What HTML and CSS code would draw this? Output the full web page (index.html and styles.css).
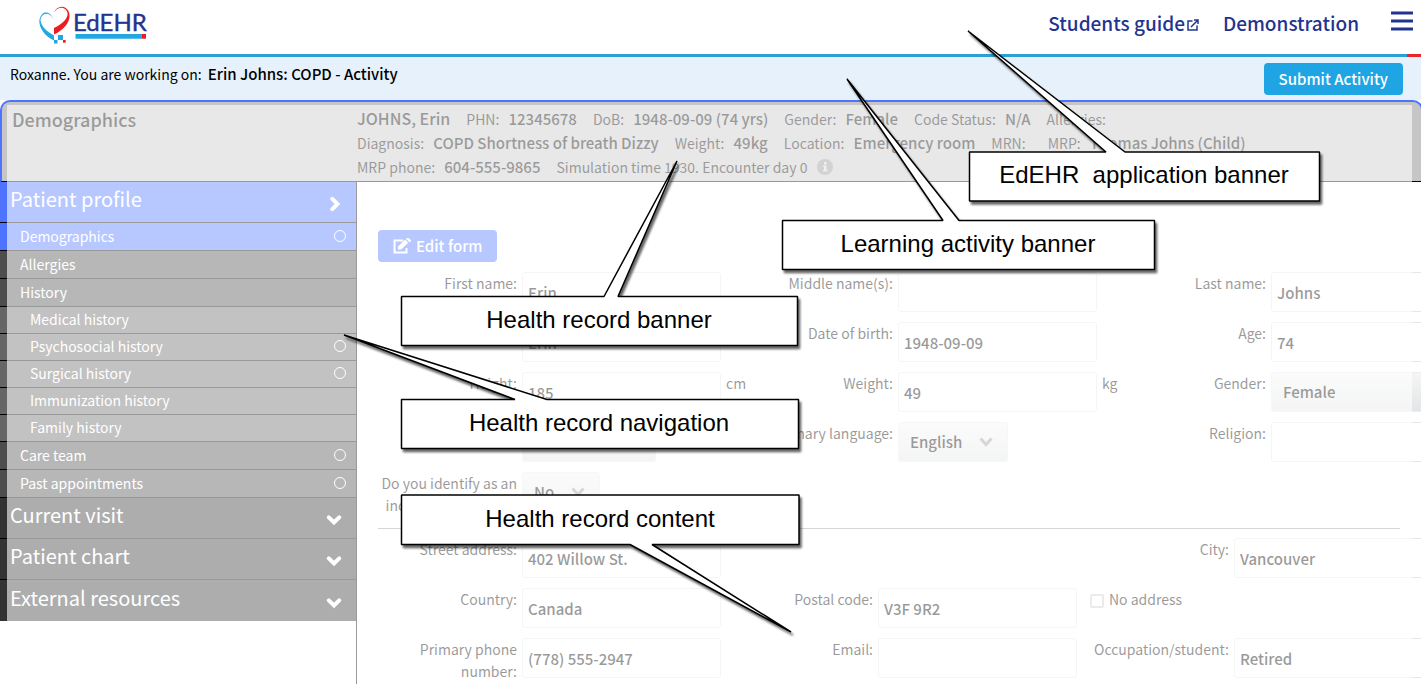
FILE: index.html
```html
<!DOCTYPE html>
<html lang="en">
<head>
<meta charset="utf-8">
<title>EdEHR - Demographics</title>
<link rel="stylesheet" href="styles.css">
</head>
<body>
<svg class="defs" aria-hidden="true">
  <symbol id="chevron-down" viewBox="0 0 16 12"><path d="M2.800 3.300 8 8.500 13.200 3.300" fill="none" stroke="currentColor" stroke-width="4" stroke-linecap="round"/></symbol>
  <symbol id="chevron-right" viewBox="0 0 12 16"><path d="M3.300 2.800 8.500 8 3.300 13.200" fill="none" stroke="currentColor" stroke-width="4" stroke-linecap="round"/></symbol>
  <symbol id="caret" viewBox="0 0 16 12"><path d="M2.500 2.500 8 8.500 13.500 2.500" fill="none" stroke="currentColor" stroke-width="3"/></symbol>
</svg>
<div class="page">
  <header class="app-bar">
    <svg class="logo" viewBox="0 0 110 40" role="img" aria-label="EdEHR">
      <path d="M15.500 13.800C13.500 7 7.500 4.500 4 8.500C-2.500 15.500 3.500 28.500 16 34.500V29.500C6 24.500 -.500 15.500 4 10C8 5.500 13.500 8.500 15.500 13.800Z" fill="#22a7e0"/>
      <path d="M16 6.500C18.500 -.500 27 -1.500 30.500 5C34 13 28.500 22.500 16 28.500V22C26 17.500 31.500 10.500 29 5.500C26.500 0 19 1 16 6.500Z" fill="#ed1c24"/>
      <path d="M20 29h5v5h-5zM16 34h3.500v3.500h-3.500z" fill="#22a7e0"/>
      <path d="M25 34h2.700v2.700h-2.700z" fill="#ed1c24"/>
      <text class="logo-text" x="35" y="25">EdEHR</text>
      <path d="M37.500 28h66v4.700h-66z" fill="#22a7e0"/>
      <path d="M103.500 28h4.500v4.700h-4.500z" fill="#ed1c24"/>
    </svg>
    <nav class="app-links">
      <a href="#guide">Students guide<svg class="external" viewBox="0 0 12 12" aria-hidden="true"><path d="M5.500 2H1v9h9V6.500M4 8l7-7M7 1h4v4" fill="none" stroke="currentColor" stroke-width="1.500"/></svg></a>
      <a href="#demo">Demonstration</a>
      <button class="menu" aria-label="Menu"><svg viewBox="0 0 22 20"><path d="M0 2h22M0 10h22M0 18h22" stroke="currentColor" stroke-width="3"/></svg></button>
    </nav>
  </header>
  <div class="stripe"></div>
  <section class="activity">
    <p>Roxanne. You are working on: <strong>Erin Johns: COPD - Activity</strong></p>
    <button class="submit">Submit Activity</button>
  </section>
  <div class="record">
    <section class="banner">
      <h1>Demographics</h1>
      <div class="facts">
        <div class="line">
          <strong class="name">JOHNS, Erin</strong>
          <span>PHN: <b>12345678</b></span><span>DoB: <b>1948-09-09 (74 yrs)</b></span><span>Gender: <b>Female</b></span><span>Code Status: <b>N/A</b></span><span>Allergies:</span>
        </div>
        <div class="line">
          <span>Diagnosis: <b>COPD Shortness of breath Dizzy</b></span><span>Weight: <b>49kg</b></span><span>Location: <b>Emergency room</b></span><span>MRN: <b></b></span><span>MRP: <b>Thomas Johns (Child)</b></span>
        </div>
        <div class="line">
          <span>MRP phone: <b>604-555-9865</b></span><span>Simulation time 1930. Encounter day 0 <svg class="info" viewBox="0 0 16 16" aria-hidden="true"><circle cx="8" cy="8" r="8" fill="#8e8e8e"/><path d="M7 3h2.500v2.500H7zM6 6.500h3.500V11h1v1.500H6V11h1V8H6z" fill="#d8d8d8"/></svg></span>
        </div>
      </div>
    </section>
    <div class="body">
      <nav class="side">
        <a class="group active" href="#profile">Patient profile<svg class="go" viewBox="0 0 12 16"><use href="#chevron-right"/></svg></a>
        <a class="item active" href="#demographics">Demographics<i></i></a>
        <a class="item" href="#allergies">Allergies</a>
        <a class="item" href="#history">History</a>
        <a class="item sub" href="#medical">Medical history</a>
        <a class="item sub" href="#psychosocial">Psychosocial history<i></i></a>
        <a class="item sub" href="#surgical">Surgical history<i></i></a>
        <a class="item sub" href="#immunization">Immunization history</a>
        <a class="item sub" href="#family">Family history</a>
        <a class="item" href="#care">Care team<i></i></a>
        <a class="item" href="#past">Past appointments<i></i></a>
        <a class="group" href="#visit">Current visit<svg viewBox="0 0 16 12"><use href="#chevron-down"/></svg></a>
        <a class="group" href="#chart">Patient chart<svg viewBox="0 0 16 12"><use href="#chevron-down"/></svg></a>
        <a class="group" href="#external">External resources<svg viewBox="0 0 16 12"><use href="#chevron-down"/></svg></a>
      </nav>
      <main class="content">
        <button class="edit"><svg viewBox="0 0 18 16" aria-hidden="true"><path d="M10 2.500H1.500v12h12V10" fill="none" stroke="currentColor" stroke-width="2"/><path d="M5 11.500V8.500L12 1.500l3.200 3.200L8.200 11.500zM13 .800 14 0h1.500L18 2.200v1L16.200 4.200z" fill="currentColor"/></svg>Edit form</button>
        <form>
          <div class="grid person">
            <div class="field"><label for="first">First name:</label><input id="first" value="Erin"></div>
            <div class="field"><label for="middle">Middle name(s):</label><input id="middle"></div>
            <div class="field"><label for="last">Last name:</label><input id="last" value="Johns"></div>
            <div class="field"><label for="pref"></label><input id="pref" value="Erin"></div>
            <div class="field"><label for="dob">Date of birth:</label><input id="dob" value="1948-09-09"></div>
            <div class="field"><label for="age">Age:</label><input id="age" value="74"></div>
            <div class="field"><label for="height">Height:</label><input id="height" value="185"><span class="unit">cm</span></div>
            <div class="field"><label for="weight">Weight:</label><input id="weight" value="49"><span class="unit">kg</span></div>
            <div class="field"><label for="gender">Gender:</label><div class="pick wide"><select id="gender"><option>Female</option></select><svg viewBox="0 0 16 12"><use href="#caret"/></svg></div></div>
            <div class="field"><label for="status"></label><div class="pick medium"><select id="status"><option></option></select></div></div>
            <div class="field"><label for="lang">Primary language:</label><div class="pick"><select id="lang"><option>English</option></select><svg viewBox="0 0 16 12"><use href="#caret"/></svg></div></div>
            <div class="field"><label for="religion">Religion:</label><input id="religion"></div>
            <div class="field"><label for="indigenous">Do you identify as an indigenous person?:</label><div class="pick"><select id="indigenous"><option>No</option></select><svg viewBox="0 0 16 12"><use href="#caret"/></svg></div></div>
          </div>
          <hr>
          <div class="grid contact">
            <div class="field"><label for="street">Street address:</label><input id="street" value="402 Willow St."></div>
            <div class="field third"><label for="city">City:</label><input id="city" value="Vancouver"></div>
            <div class="field"><label for="country">Country:</label><input id="country" value="Canada"></div>
            <div class="field"><label for="postal">Postal code:</label><input id="postal" value="V3F 9R2"></div>
            <div class="check"><input type="checkbox" id="noaddr"><label for="noaddr">No address</label></div>
            <div class="field"><label for="phone">Primary phone number:</label><input id="phone" value="(778) 555-2947"></div>
            <div class="field"><label for="email">Email:</label><input id="email"></div>
            <div class="field"><label for="job">Occupation/student:</label><input id="job" value="Retired"></div>
          </div>
        </form>
      </main>
    </div>
    <div class="veil"></div>
  </div>
  <svg class="callouts" width="1421" height="684" viewBox="0 0 1421 684">
    <g class="bubble"><path d="M969.500 152H1106L968 31 1125 152H1319.500V201H969.500Z"/><text x="1144" y="183">EdEHR&#160; application banner</text></g>
    <g class="bubble"><path d="M782.500 220.500H943L847 79 959 220.500H1154.500V269.500H782.500Z"/><text x="968" y="252">Learning activity banner</text></g>
    <g class="bubble"><path d="M401.500 296.500H604L677 161 618 296.500H797.500V345.500H401.500Z"/><text x="599" y="328">Health record banner</text></g>
    <g class="bubble"><path d="M401.500 399.500H515L344 335 547 399.500H798.500V448.500H401.500Z"/><text x="599" y="431">Health record navigation</text></g>
    <g class="bubble"><path d="M401.500 495H799V544.500H652L791 632 630 544.500H401.500Z"/><text x="600" y="527">Health record content</text></g>
  </svg>
</div>
</body>
</html>
```
FILE: styles.css
```css
* { box-sizing: border-box; }
body {
  margin: 0;
  background: #fff;
  color: #000;
  font: 14px/22px "Noto Sans CJK SC", "Noto Sans", sans-serif;
}
button, input, select { font: inherit; color: inherit; }
a { color: inherit; text-decoration: none; }
.defs { position: absolute; width: 0; height: 0; }
.page { position: relative; height: 100vh; overflow: hidden; display: flex; flex-direction: column; }

.app-bar { display: flex; justify-content: space-between; align-items: center; height: 54px; flex: none; padding: 0 8px 2px 38px; color: #22348f; }
.logo { width: 110px; height: 40px; }
.logo-text { font: 400 24px Lato, sans-serif; fill: #22348f; stroke: #22348f; stroke-width: .4; }
.app-links { display: flex; align-items: center; gap: 24px; padding-bottom: 6px; font-size: 19px; font-weight: 500; }
.external { width: 12px; height: 12px; margin-left: 2px; }
.menu { width: 22px; height: 20px; margin: 0 0 4px 8px; padding: 0; border: 0; background: none; }
.menu svg { display: block; }
.stripe { height: 3px; flex: none; background: linear-gradient(to left, #e8262c 14px, #2e9fd3 14px); }

.activity { display: flex; justify-content: space-between; align-items: flex-start; height: 43px; flex: none; padding: 6px 18px 0 10px; background: #e6f1fc; }
.activity p { margin: 0; }
.activity strong { margin-left: 3px; font-size: 15px; font-weight: 500; }
.submit { height: 32px; padding: 0 15px; border: 0; border-radius: 4px; background: #1fa5e3; color: #fff; font-size: 15px; font-weight: 500; }

.record { position: relative; flex: 1; display: flex; flex-direction: column; min-height: 0; }
.veil { position: absolute; inset: 5px 9px 0 7px; background: rgba(255, 255, 255, .6); pointer-events: none; }
.banner { display: flex; flex: none; height: 82px; margin-right: -2px; padding: 5px 10px 4px; border: 2px solid #4d73ff; border-bottom: 1px solid #000; border-radius: 10px 10px 0 0; background: #c6c6c6; }
.banner h1 { width: 345px; flex: none; margin: 0; font-size: 18px; line-height: 24px; font-weight: 500; }
.line { display: flex; align-items: baseline; gap: 16px; white-space: nowrap; line-height: 23px; }
.line b { margin-left: 6px; font-size: 15px; font-weight: 500; }
.name { font-size: 16px; font-weight: 500; }
.info { width: 16px; height: 16px; margin-left: 6px; vertical-align: -2px; }

.body { flex: 1; display: flex; min-height: 0; }
.side { width: 357px; flex: none; border-right: 1px solid #000; color: #fff; }
.group, .item { display: flex; justify-content: space-between; border-bottom: 1px solid #000; }
.group { height: 41px; padding: 0 14px 6px 10px; align-items: center; background: #333; font-size: 20px; }
.group:last-child { border-bottom: 0; }
.group svg { width: 16px; height: 12px; margin-top: 10px; }
.group .go { width: 12px; height: 16px; margin-right: 1px; }
.item { height: 28px; padding: 0 10px 2px 20px; align-items: center; background: #4d4d4d; }
.item i { width: 12px; height: 12px; border: 1px solid #fff; border-radius: 50%; }
.sub { height: 27px; padding-left: 30px; background: #666; }
.side .active { background: #4d73ff; }

.content { flex: 1; min-width: 0; padding: 48px 21px 0; }
.edit { display: flex; align-items: center; gap: 5px; height: 32px; margin-bottom: 10px; padding: 0 15px; border: 0; border-radius: 4px; background: #4d73ff; color: #fff; font-size: 15px; font-weight: 500; }
.edit svg { width: 18px; height: 16px; }
.grid { display: grid; grid-auto-rows: 40px; row-gap: 10px; }
.person { grid-template-columns: 376px 373px 344px; }
.contact { grid-template-columns: 356px 356px 344px; }
.third { grid-column: 3; }
.field { display: grid; grid-template-columns: 139px 199px 1fr; column-gap: 5px; }
.field label { text-align: right; }
.field input { width: 100%; height: 40px; padding: 0 5px; border: 1px solid #e6e6e6; border-radius: 3px; background: #fff; font-size: 15px; font-weight: 500; }
.pick { display: grid; place-self: start; align-items: center; color: #999; }
.pick select, .pick svg { grid-area: 1 / 1; }
.pick select { height: 40px; padding: 0 44px 0 11px; appearance: none; border: 1px solid #ececec; border-radius: 3px; background: linear-gradient(#f5f5f5, #e3e5e6); color: #000; font-size: 15px; font-weight: 500; }
.pick svg { justify-self: end; width: 16px; height: 12px; margin-right: 14px; pointer-events: none; }
.pick.medium select { width: 134px; }
.pick.wide select { width: 199px; }
.check { display: flex; align-items: flex-start; gap: 5px; }
.check input { width: 14px; height: 14px; margin: 6px 0 0; appearance: none; border: 2px solid #ccc; border-radius: 2px; background: #fff; }
hr { margin: 16px 0 9px; border: 0; border-top: 1px solid #999; }

.callouts { position: absolute; top: 0; left: 0; pointer-events: none; }
.bubble path { fill: #fff; stroke: #000; stroke-width: 1.5; stroke-linejoin: bevel; filter: drop-shadow(2px 3px 1px rgba(0, 0, 0, .6)); }
.bubble text { font: 24px "Liberation Sans", Arial, sans-serif; text-anchor: middle; }
```
